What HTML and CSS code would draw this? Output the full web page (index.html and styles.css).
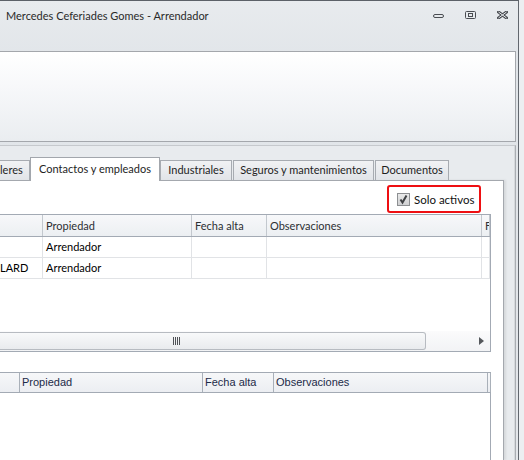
FILE: index.html
```html
<!DOCTYPE html>
<html>
<head>
<meta charset="utf-8">
<link rel="stylesheet" href="styles.css">
</head>
<body>
<div class="window">
  <div class="titlebar">
    <span class="title">Mercedes Ceferiades Gomes - Arrendador</span>
    <div class="controls">
      <svg class="ctl" width="11" height="8" viewBox="0 0 11 8"><rect x="0.5" y="3.5" width="10" height="3" rx="1.5" fill="none" stroke="#4a4d52"/></svg>
      <svg class="ctl" width="11" height="8" viewBox="0 0 11 8"><rect x="0.5" y="0.5" width="10" height="7" rx="1" fill="none" stroke="#4a4d52"/><rect x="3.5" y="2.5" width="4" height="3" fill="none" stroke="#4a4d52"/></svg>
      <svg class="ctl" width="11" height="8" viewBox="0 0 11 8"><path d="M1.5 1 L9.5 7 M9.5 1 L1.5 7" stroke="#4a4d52" stroke-width="3" stroke-linecap="square"/><path d="M1.5 1 L9.5 7 M9.5 1 L1.5 7" stroke="#e6e9ed" stroke-width="1" stroke-linecap="butt"/></svg>
    </div>
  </div>
  <div class="ribbon"></div>
  <div class="tabcontrol">
    <div class="tabstrip">
      <div class="tab tab-talleres">leres</div>
      <div class="tab tab-active">Contactos y empleados</div>
      <div class="tab tab-ind">Industriales</div>
      <div class="tab tab-seg">Seguros y mantenimientos</div>
      <div class="tab tab-doc">Documentos</div>
    </div>
    <div class="page">
      <div class="filter-row">
        <label class="check-box">
          <span class="check"><svg width="11" height="11" viewBox="0 0 11 11"><path d="M2.5 5.5 L4.5 8.5 L8.5 1.5" fill="none" stroke="#3f4144" stroke-width="2"/></svg></span>
          <span class="check-label">Solo activos</span>
        </label>
      </div>
      <div class="grid grid-top">
        <div class="grow ghead">
          <div class="cell"></div>
          <div class="cell">Propiedad</div>
          <div class="cell">Fecha alta</div>
          <div class="cell">Observaciones</div>
          <div class="cell">F</div>
        </div>
        <div class="grow gdata">
          <div class="cell"></div>
          <div class="cell">Arrendador</div>
          <div class="cell"></div>
          <div class="cell"></div>
          <div class="cell"></div>
        </div>
        <div class="grow gdata">
          <div class="cell cell-first">LARD</div>
          <div class="cell">Arrendador</div>
          <div class="cell"></div>
          <div class="cell"></div>
          <div class="cell"></div>
        </div>
        <div class="gbody"></div>
        <div class="hscroll">
          <div class="thumb"><span class="grip"></span></div>
          <span class="arrow"></span>
        </div>
      </div>
      <div class="grid grid-bottom">
        <div class="grow2 ghead2">
          <div class="cell"></div>
          <div class="cell">Propiedad</div>
          <div class="cell">Fecha alta</div>
          <div class="cell">Observaciones</div>
          <div class="cell"></div>
        </div>
      </div>
    </div>
  </div>
</div>
</body>
</html>
```
FILE: styles.css
```css
html, body {
  margin: 0;
  padding: 0;
}
body {
  width: 524px;
  height: 460px;
  overflow: hidden;
  background: #eceef1;
  font-family: Lato, "Open Sans", sans-serif;
  font-size: 11px;
  color: #1e1e1e;
}
.window {
  width: 519px;
  height: 460px;
  box-sizing: border-box;
  border-top: 1px solid #5c6168;
  border-right: 1px solid #62676e;
  background: linear-gradient(#e8ebee, #e1e5e9 60px, #e4e7eb);
  display: flex;
  flex-direction: column;
  overflow: hidden;
}
.titlebar {
  height: 50px;
  flex: none;
  display: flex;
  align-items: flex-start;
  padding: 7px 10px 0 6px;
  box-sizing: border-box;
}
.title {
  font-size: 11px;
  line-height: 16px;
  color: #2a2a2a;
}
.controls {
  margin-left: auto;
  margin-top: 3px;
  display: flex;
  gap: 21px;
}
.ctl {
  display: block;
}
.ribbon {
  flex: none;
  width: 516px;
  height: 91px;
  box-sizing: border-box;
  border-top: 1px solid #a4a7ac;
  border-right: 1px solid #a4a7ac;
  border-bottom: 1px solid #a4a7ac;
  background: linear-gradient(#ffffff, #f7f8fa 35px, #eaedf0);
}
.tabcontrol {
  flex: 1;
  margin-top: 3px;
  width: 516px;
  box-sizing: border-box;
  border-top: 1px solid #c6c9cd;
  border-right: 1px solid #a9adb2;
  box-shadow: inset -1px 0 #d6d9dc;
  background: #e8ebee;
  padding: 11px 11px 0 0;
  display: flex;
  flex-direction: column;
}
.tabstrip {
  height: 23px;
  flex: none;
  display: flex;
  align-items: flex-end;
  position: relative;
  z-index: 1;
}
.tab {
  box-sizing: border-box;
  height: 20px;
  line-height: 18px;
  text-align: center;
  border: 1px solid #a7abb1;
  border-bottom: none;
  background: linear-gradient(#f1f2f4, #e1e4e8);
  color: #1e1e1e;
  white-space: nowrap;
  overflow: hidden;
}
.tab-talleres {
  width: 30px;
  border-left: none;
  text-align: left;
  padding-left: 0;
}
.tab-active {
  width: 130px;
  height: 24px;
  line-height: 22px;
  margin-bottom: -1px;
  background: #ffffff;
  border-color: #a2a6ac;
}
.tab-ind {
  width: 72px;
}
.tab-seg {
  width: 141px;
  margin-left: 1px;
}
.tab-doc {
  width: 74px;
  margin-left: 1px;
}
.page {
  flex: 1;
  background: #ffffff;
  border-top: 1px solid #a4a8ae;
  border-right: 1px solid #a4a8ae;
  box-shadow: 2px 0 2px rgba(0, 0, 0, 0.08);
  padding: 4px 12px 0 0;
  display: flex;
  flex-direction: column;
}
.filter-row {
  display: flex;
  justify-content: flex-end;
  height: 28px;
  margin-bottom: 1px;
}
.check-box {
  width: 94px;
  height: 28px;
  box-sizing: border-box;
  border: 2px solid #ee0f12;
  border-radius: 3px;
  margin-right: 10px;
  display: flex;
  align-items: center;
  padding-left: 8px;
  gap: 4px;
}
.check {
  width: 13px;
  height: 13px;
  box-sizing: border-box;
  border: 1px solid #8d8f92;
  background: linear-gradient(#eaeaea, #cfd0d2);
  display: flex;
  align-items: center;
  justify-content: center;
  margin-top: 1px;
}
.check svg {
  display: block;
}
.check-label {
  color: #111;
  font-size: 11.5px;
}
.grid {
  border-top: 1px solid #a3aab4;
  border-right: 1px solid #a3aab4;
  display: flex;
  flex-direction: column;
}
.grid-top {
  height: 138px;
  box-sizing: border-box;
  border-bottom: 1px solid #a3aab4;
}
.grow {
  display: grid;
  grid-template-columns: 43px 149px 75px 215px 1fr;
}
.grow .cell {
  box-sizing: border-box;
  padding-left: 3px;
  white-space: nowrap;
  overflow: hidden;
}
.ghead {
  height: 22px;
  box-sizing: border-box;
  background: linear-gradient(#f7f8fa, #eceff2);
  border-bottom: 1px solid #a3aab4;
  line-height: 21px;
  color: #2c2f33;
}
.ghead .cell {
  border-right: 1px solid #c3c8ce;
}
.gdata {
  height: 21px;
  box-sizing: border-box;
  border-bottom: 1px solid #e1e3e6;
  line-height: 20px;
  color: #000;
}
.gdata .cell {
  border-right: 1px solid #e1e3e6;
}
.gdata .cell-first {
  padding-left: 0;
}
.gbody {
  flex: 1;
}
.hscroll {
  height: 20px;
  flex: none;
  display: flex;
  align-items: center;
  background: linear-gradient(#fbfbfc, #f2f3f5);
}
.thumb {
  width: 426px;
  height: 18px;
  box-sizing: border-box;
  border: 1px solid #b7bbc1;
  border-left: none;
  border-radius: 0 3px 3px 0;
  background: linear-gradient(#f8f9fa, #e9ebee);
  display: flex;
  align-items: center;
  justify-content: center;
}
.grip {
  width: 7px;
  height: 8px;
  margin-left: -72px;
  background: repeating-linear-gradient(90deg, #4f5256 0 1px, transparent 1px 2px);
}
.arrow {
  margin-left: auto;
  margin-right: 6px;
  width: 0;
  height: 0;
  border-left: 5px solid #55585c;
  border-top: 4px solid transparent;
  border-bottom: 4px solid transparent;
}
.grid-bottom {
  margin-top: 20px;
  flex: 1;
}
.grow2 {
  display: grid;
  grid-template-columns: 20px 183px 71px 214px 1fr;
}
.ghead2 {
  height: 20px;
  box-sizing: border-box;
  background: linear-gradient(#f6f7f9, #eceef2);
  border-bottom: 1px solid #a3aab4;
  line-height: 19px;
  font-family: "Liberation Sans", Arial, sans-serif;
  font-size: 11px;
  color: #1c2a48;
}
.ghead2 .cell {
  box-sizing: border-box;
  padding-left: 2px;
  border-right: 1px solid #a9b0b9;
  white-space: nowrap;
  overflow: hidden;
}
```
